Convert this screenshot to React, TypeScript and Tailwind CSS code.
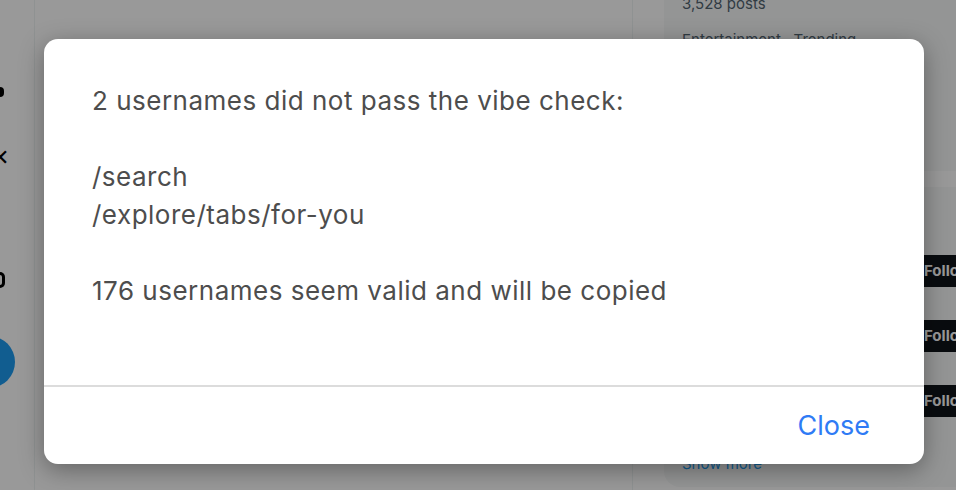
import React from "react";

function FollowRow() {
  return (
    <div className="h-[65px] flex items-center pl-[244px]">
      <div className="h-[32px] px-[16px] rounded-full bg-[#0f1419] text-white text-[15px] font-bold leading-[32px]">Follow</div>
    </div>
  );
}

export default function App() {
  return (
    <div className="relative w-[956px] h-[490px] overflow-hidden bg-white" style={{ fontFamily: "Inter, 'Liberation Sans', sans-serif" }}>
      {/* underlying page */}
      <div className="flex h-full">
        <div className="w-[35px] shrink-0 border-r border-[#eff3f4] h-full flex flex-col items-start pt-[87px]">
          <div className="w-[4px] h-[10px] bg-black rounded-r-sm" />
          <div className="text-[22px] leading-none text-black -ml-[9px] mt-[49px]">✕</div>
          <div className="w-[5px] h-[16px] border-[3px] border-l-0 border-black rounded-r-full mt-[104px]" />
          <div className="w-[52px] h-[52px] rounded-full bg-[#1d9bf0] -ml-[37px] mt-[48px]" />
        </div>
        <div className="w-[598px] shrink-0 border-r border-[#eff3f4] h-full" />
        <div className="pl-[31px] flex flex-col gap-[16px] w-[400px] shrink-0">
          <div className="bg-[#f7f9f9] rounded-b-2xl h-[177px] px-[18px] -mt-[6px]">
            <div className="text-[15px] text-[#536471] leading-[20px]">3,528 posts</div>
            <div className="text-[15px] text-[#536471] leading-[20px] mt-[16px]">Entertainment · Trending</div>
          </div>
          <div className="bg-[#f7f9f9] rounded-2xl h-[300px] flex flex-col pt-[51px]">
            <FollowRow />
            <FollowRow />
            <FollowRow />
            <div className="pl-[18px] pt-[21px] text-[15px] text-[#1d9bf0] leading-[20px]">Show more</div>
          </div>
        </div>
      </div>

      {/* modal overlay */}
      <div className="absolute inset-0 bg-black/40 pl-[44px] pt-[39px]">
        <div className="w-[880px] h-[425px] bg-white rounded-[14px] shadow-[0_6px_24px_rgba(0,0,0,0.35)] flex flex-col">
          <div className="flex-1 pl-[48px] pt-[43px] text-[26px] tracking-[0.5px] leading-[38px] text-[#4d4d4d]">
            <div>2 usernames did not pass the vibe check:</div>
            <div>&nbsp;</div>
            <div>/search</div>
            <div>/explore/tabs/for-you</div>
            <div>&nbsp;</div>
            <div>176 usernames seem valid and will be copied</div>
          </div>
          <div className="h-[79px] border-t-[2px] border-[#dcdcdc] flex items-center justify-end pr-[54px]">
            <span className="text-[27px] text-[#2f7bf5] leading-none">Close</span>
          </div>
        </div>
      </div>
    </div>
  );
}
